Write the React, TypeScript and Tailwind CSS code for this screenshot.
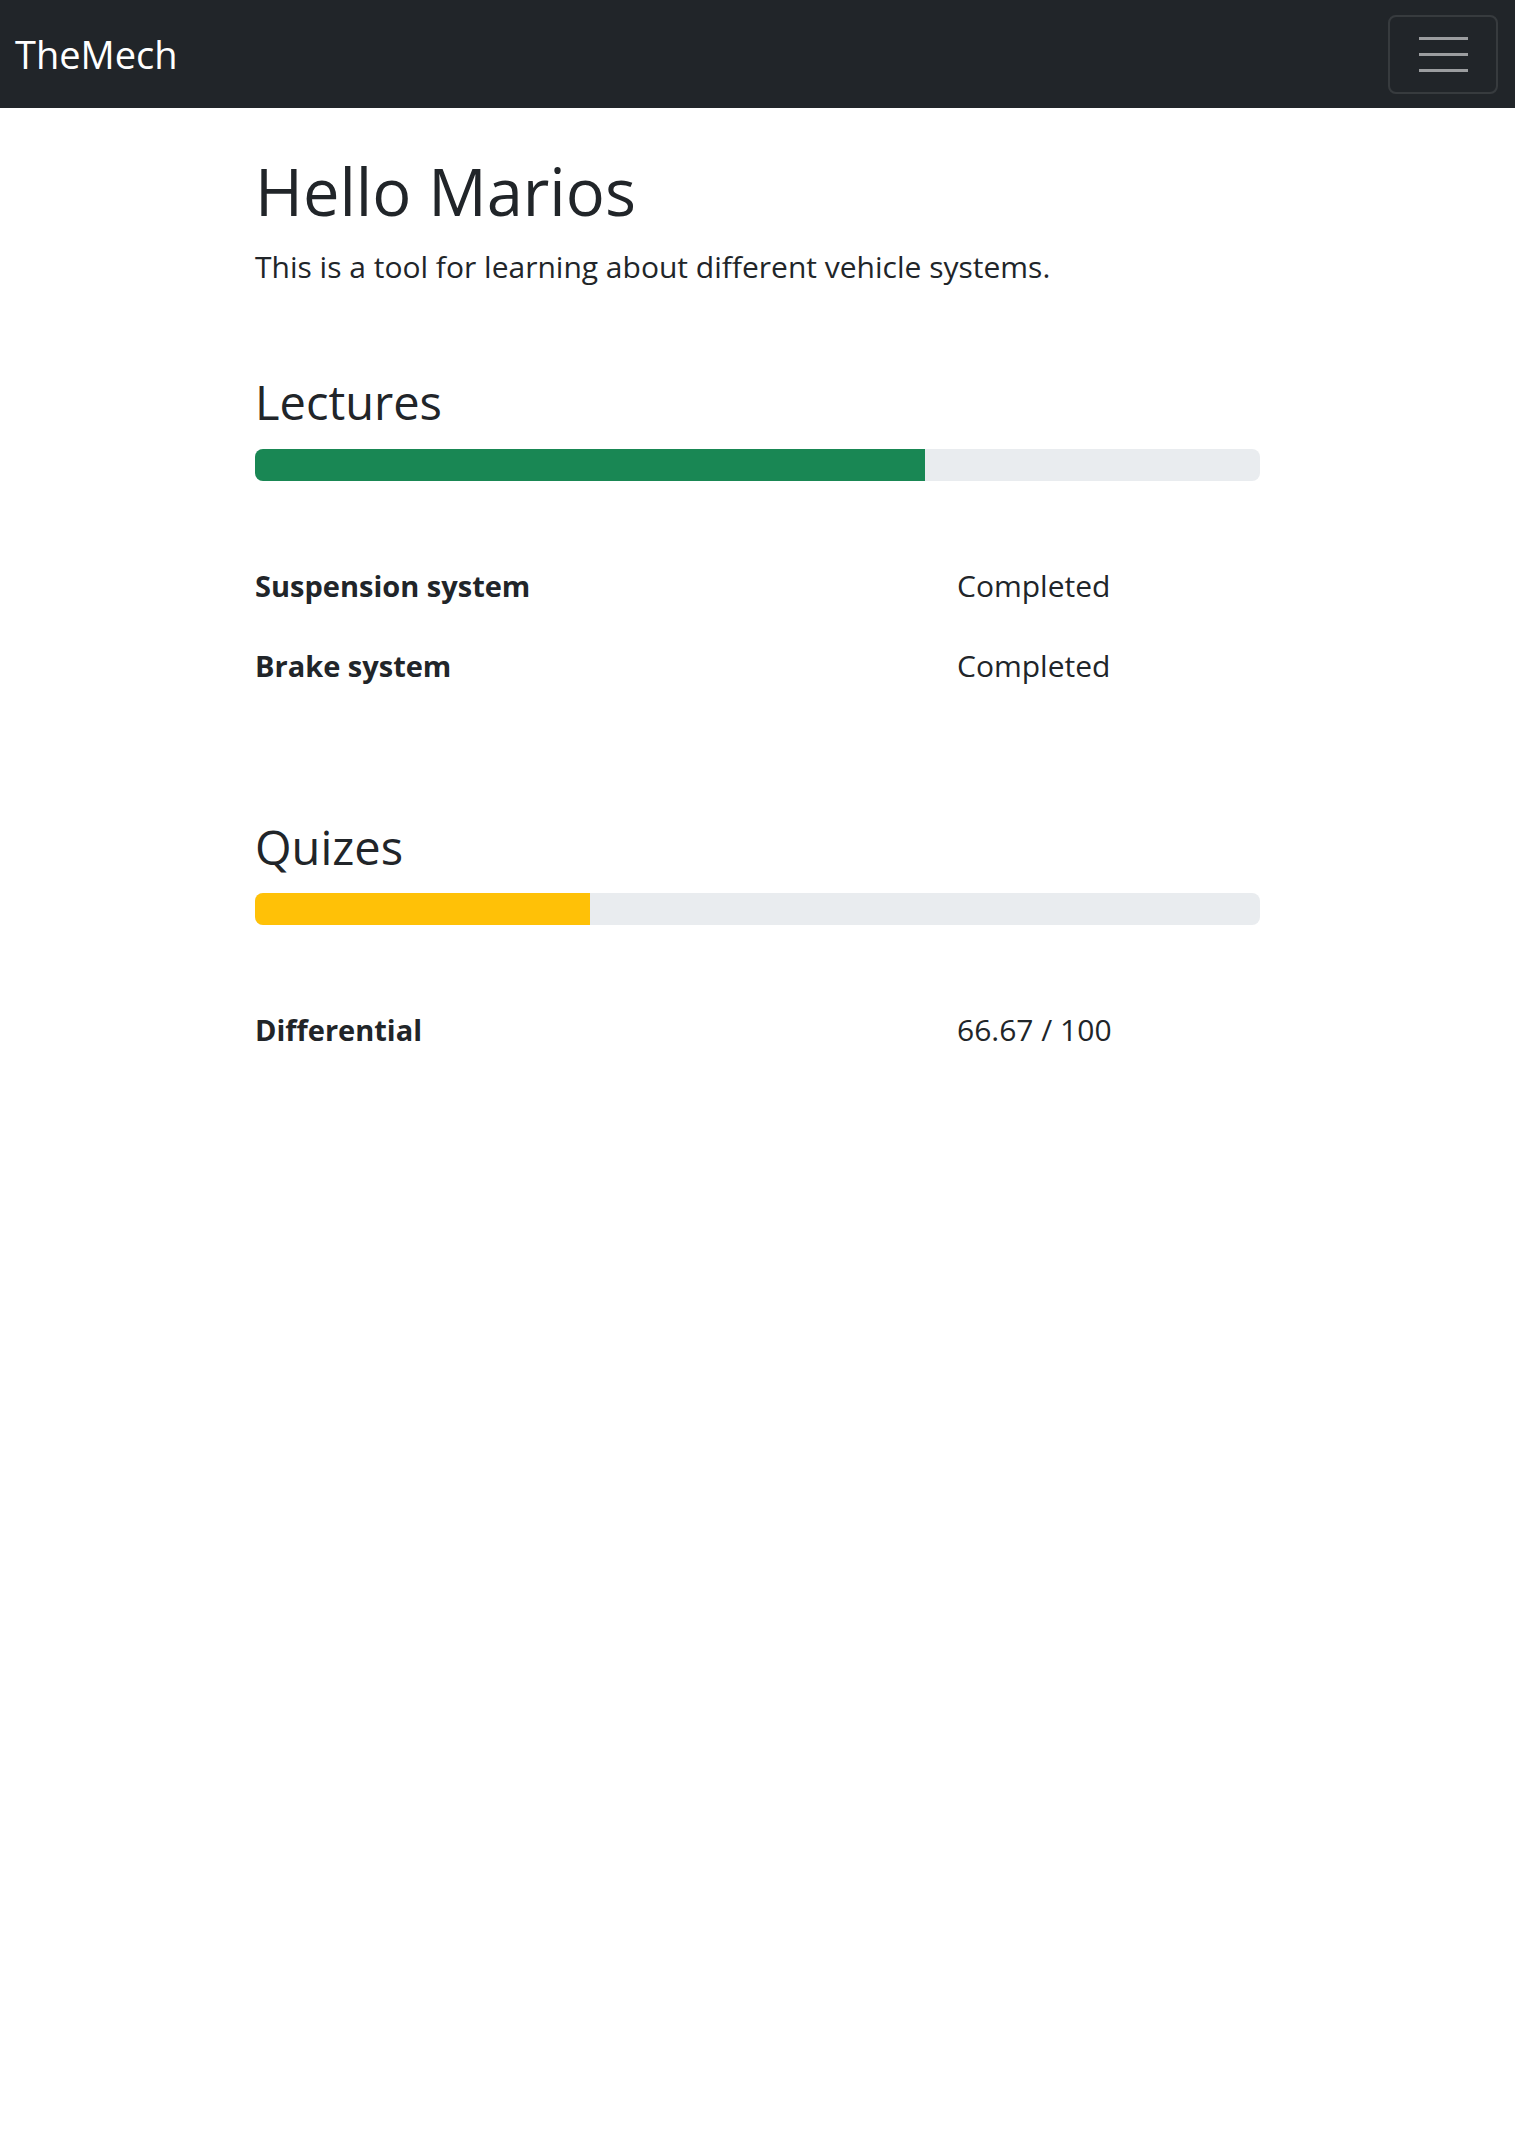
import React from 'react'

type Row = { name: string; value: string }

const lectures: Row[] = [
  { name: 'Suspension system', value: 'Completed' },
  { name: 'Brake system', value: 'Completed' },
]

const quizes: Row[] = [{ name: 'Differential', value: '66.67 / 100' }]

function Progress({ pct, color }: { pct: number; color: string }) {
  return (
    <div className="h-[32px] w-full bg-[#e9ecef] rounded-[8px] overflow-hidden flex">
      <div className={`h-full ${color}`} style={{ width: pct + '%' }} />
    </div>
  )
}

function Rows({ rows }: { rows: Row[] }) {
  return (
    <div>
      {rows.map(r => (
        <div key={r.name} className="grid grid-cols-[702px_1fr] h-[80px] items-center">
          <div className="font-bold text-[29px] leading-[80px]">{r.name}</div>
          <div className="text-[30px] leading-[80px]">{r.value}</div>
        </div>
      ))}
    </div>
  )
}

export default function App() {
  return (
    <div className="min-h-[2148px] bg-white text-[#212529]" style={{ fontFamily: '"Open Sans", "Noto Sans", sans-serif' }}>
      <nav className="h-[108px] bg-[#212529] flex items-center justify-between pl-[15px] pr-[17px]">
        <span className="text-white text-[38px] leading-none">TheMech</span>
        <button className="w-[110px] h-[79px] border-2 border-white/10 rounded-[8px] flex flex-col items-center justify-center gap-[13px]">
          <span className="block w-[49px] h-[3px] bg-white/55" />
          <span className="block w-[49px] h-[3px] bg-white/55" />
          <span className="block w-[49px] h-[3px] bg-white/55" />
        </button>
      </nav>

      <main className="ml-[255px] w-[1005px]">
        <h1 className="mt-[44px] text-[65px] leading-[79px] font-medium">Hello Marios</h1>
        <p className="mt-[13px] text-[30px] leading-[46px]">This is a tool for learning about different vehicle systems.</p>

        <h3 className="mt-[85px] text-[47px] leading-[55px] font-medium">Lectures</h3>
        <div className="mt-[19px]">
          <Progress pct={66.67} color="bg-[#198754]" />
        </div>
        <div className="mt-[65px]">
          <Rows rows={lectures} />
        </div>

        <h3 className="mt-[114px] text-[47px] leading-[55px] font-medium">Quizes</h3>
        <div className="mt-[18px]">
          <Progress pct={33.33} color="bg-[#ffc107]" />
        </div>
        <div className="mt-[65px]">
          <Rows rows={quizes} />
        </div>
      </main>
    </div>
  )
}
